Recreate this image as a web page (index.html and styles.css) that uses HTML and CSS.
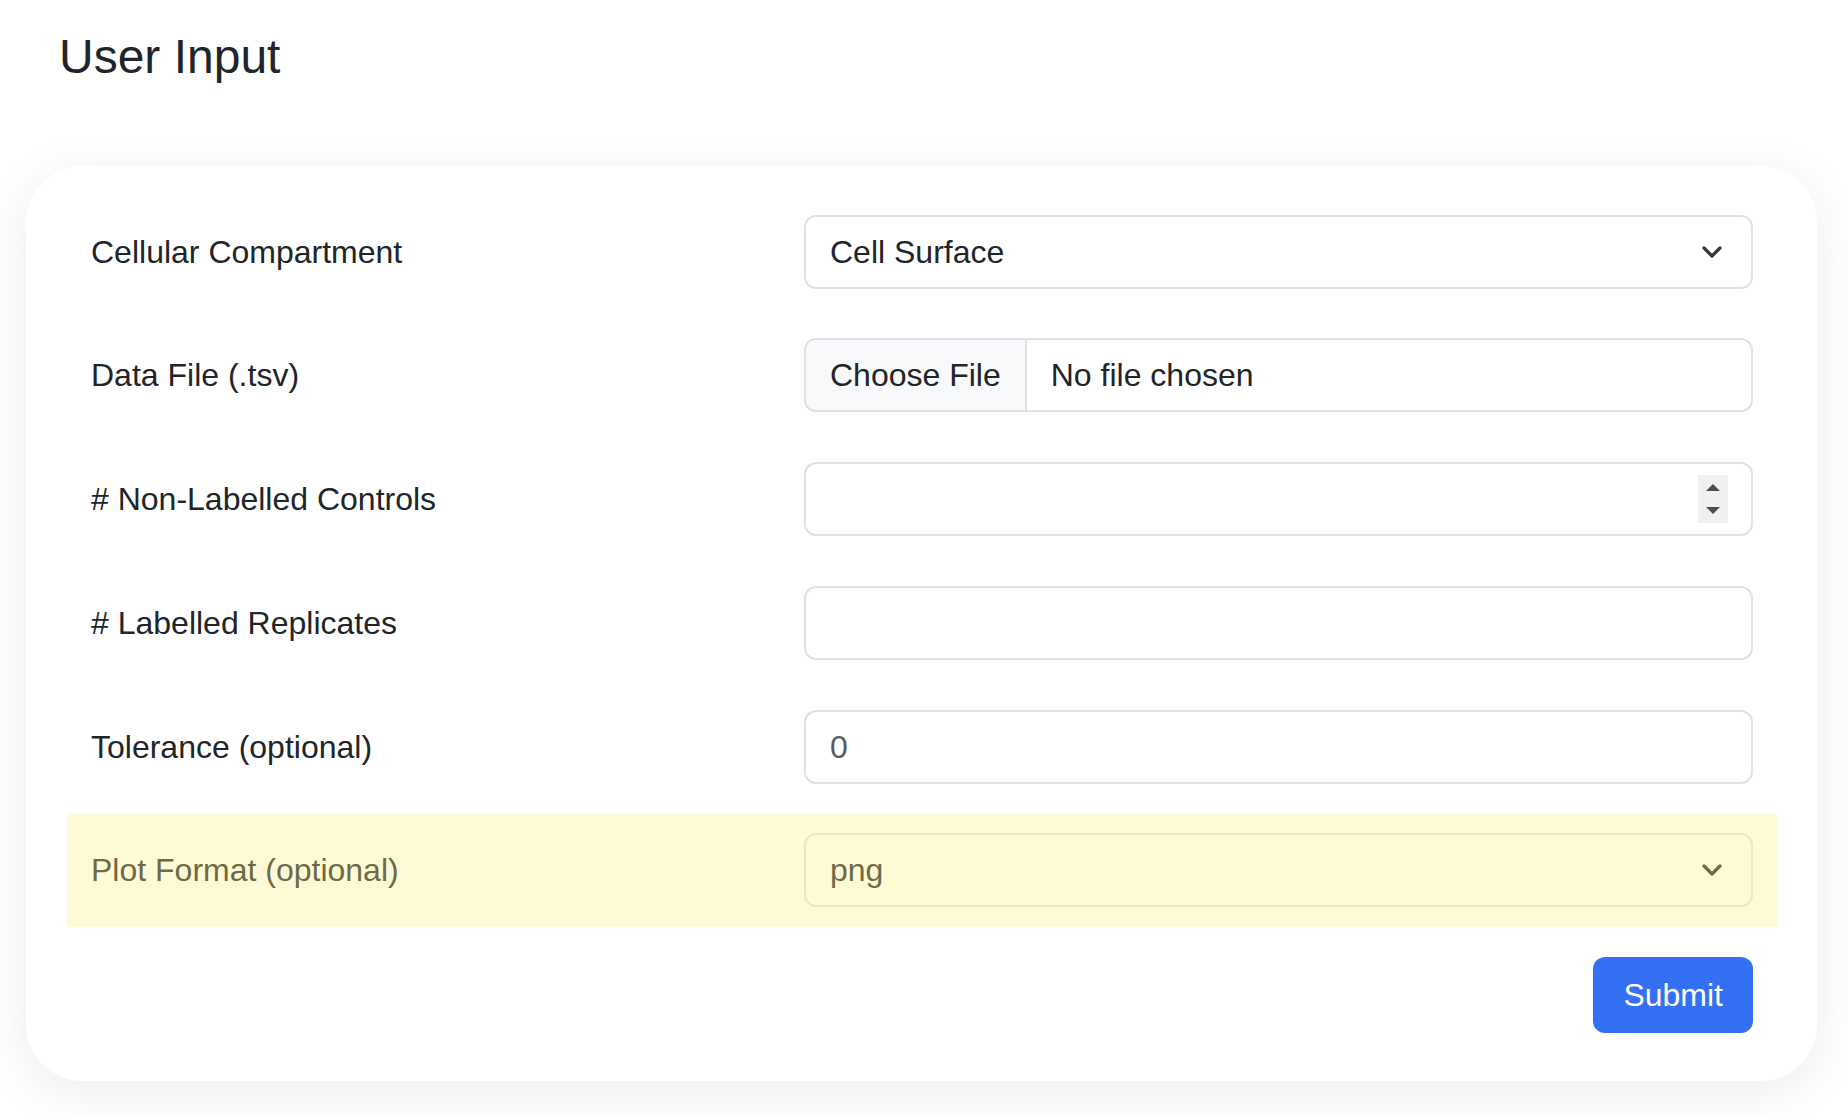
FILE: index.html
```html
<!DOCTYPE html>
<html lang="en">
<head>
<meta charset="utf-8">
<title>User Input</title>
<link rel="stylesheet" href="styles.css">
</head>
<body>
<h1 class="page-title">User Input</h1>
<form class="card">
  <div class="field">
    <label class="field-label">Cellular Compartment</label>
    <div class="control control-select">
      <span class="control-value">Cell Surface</span>
      <svg class="chevron" width="20" height="12" viewBox="0 0 20 12"><path d="M2 2l8 8 8-8" fill="none" stroke="currentColor" stroke-width="3.2" stroke-linecap="round" stroke-linejoin="round"/></svg>
    </div>
  </div>
  <div class="field">
    <label class="field-label">Data File (.tsv)</label>
    <div class="control control-file">
      <span class="file-button">Choose File</span>
      <span class="file-name">No file chosen</span>
    </div>
  </div>
  <div class="field">
    <label class="field-label"># Non-Labelled Controls</label>
    <div class="control control-number">
      <span class="spinner">
        <svg width="30" height="48" viewBox="0 0 30 48"><path d="M8 16h14l-7-7z" fill="#4d4d4d"/><path d="M8 32h14l-7 7z" fill="#4d4d4d"/></svg>
      </span>
    </div>
  </div>
  <div class="field">
    <label class="field-label"># Labelled Replicates</label>
    <div class="control"></div>
  </div>
  <div class="field">
    <label class="field-label">Tolerance (optional)</label>
    <div class="control"><span class="control-placeholder">0</span></div>
  </div>
  <div class="field field-highlight">
    <label class="field-label">Plot Format (optional)</label>
    <div class="control control-select">
      <span class="control-value">png</span>
      <svg class="chevron" width="20" height="12" viewBox="0 0 20 12"><path d="M2 2l8 8 8-8" fill="none" stroke="currentColor" stroke-width="3.2" stroke-linecap="round" stroke-linejoin="round"/></svg>
    </div>
  </div>
  <div class="actions">
    <button type="button" class="btn-submit">Submit</button>
  </div>
</form>
</body>
</html>
```
FILE: styles.css
```css
html, body {
  margin: 0;
  padding: 0;
}
body {
  background: #ffffff;
  color: #212529;
  font-family: "Liberation Sans", Arial, Helvetica, sans-serif;
}
.page-title {
  margin: 28px 0 0 59px;
  font-size: 48px;
  line-height: 57.6px;
  font-weight: 400;
  color: #212529;
}
.card {
  margin: 80px 31px 33px 26px;
  padding: 29px 40px 48px 41px;
  background: #ffffff;
  border-radius: 56px;
  box-shadow: 0 10px 50px rgba(20, 30, 45, 0.08);
  display: flex;
  flex-direction: column;
  gap: 9.75px;
}
.field {
  display: grid;
  grid-template-columns: 713px 1fr;
  align-items: center;
  padding: 20px 24px;
}
.field-label {
  font-size: 32px;
  line-height: 48px;
}
.control {
  box-sizing: border-box;
  height: 74px;
  border: 2px solid #dee2e6;
  border-radius: 12px;
  background: #ffffff;
  display: flex;
  align-items: center;
  padding: 0 24px;
  font-size: 32px;
  line-height: 48px;
  color: #212529;
}
.control-select {
  justify-content: space-between;
  padding-right: 29px;
}
.chevron {
  display: block;
  color: #343a40;
}
.control-file {
  padding: 0;
  overflow: hidden;
}
.file-button {
  height: 100%;
  display: flex;
  align-items: center;
  padding: 0 24px;
  background: #f8f9fa;
  border-right: 2px solid #dee2e6;
}
.file-name {
  padding-left: 24px;
}
.control-number {
  justify-content: flex-end;
  padding-right: 23px;
}
.spinner {
  display: block;
  width: 30px;
  height: 48px;
  background: #f0f0f0;
}
.spinner svg {
  display: block;
}
.control-placeholder {
  color: #595c5f;
}
.field-highlight {
  background: #fefad5;
}
.field-highlight .field-label {
  color: #6e6a47;
}
.field-highlight .control {
  background: #fefad5;
  border-color: #ebe6c3;
  color: #6e6a47;
}
.field-highlight .chevron {
  color: #6e6a47;
}
.actions {
  display: flex;
  justify-content: flex-end;
  padding: 20px 24px 0;
}
.btn-submit {
  box-sizing: border-box;
  height: 76px;
  padding: 0 30px;
  border: 0;
  border-radius: 12px;
  background: #3470f3;
  color: #ffffff;
  font-family: "Liberation Sans", Arial, Helvetica, sans-serif;
  font-size: 32px;
  line-height: 48px;
  cursor: pointer;
}
```
